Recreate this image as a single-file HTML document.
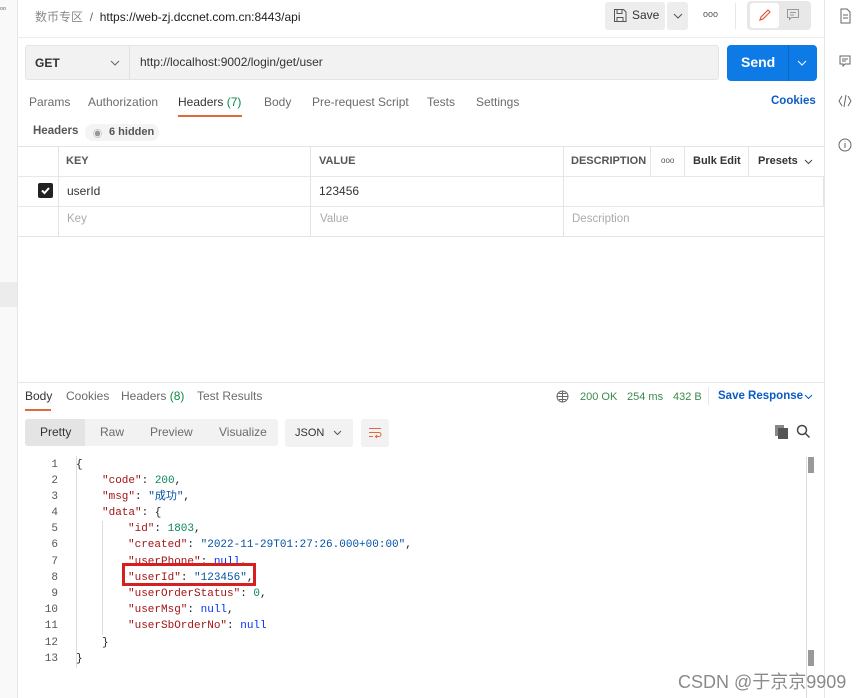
<!DOCTYPE html>
<html><head><meta charset="utf-8"><style>
*{margin:0;padding:0;box-sizing:border-box}
body{width:864px;height:698px;position:relative;overflow:hidden;background:#fff;font-family:"Liberation Sans","Noto Sans CJK SC",sans-serif;font-size:12px;color:#212121}
.a{position:absolute;white-space:nowrap}
.g{color:#6b6b6b}
.code{font-family:"Liberation Mono","Noto Sans CJK SC",monospace;font-size:11px;line-height:14px;height:14px}
.k{color:#a31515}.s{color:#0451a5}.n{color:#098658}.nl{color:#0431fa}
.ln{position:absolute;left:30px;width:28px;text-align:right;color:#555;font-family:"Liberation Mono",monospace;font-size:11px;line-height:14px}
</style></head><body>
<div class="a" style="left:0;top:0;width:18px;height:698px;background:#f9f9f9;border-right:1px solid #e6e6e6"></div>
<div class="a" style="left:0;top:282px;width:17px;height:25px;background:#ececec"></div>
<div class="a" style="left:0;top:5px;font-size:8px;color:#666">ᵒᵒ</div>
<div class="a" style="left:824px;top:0;width:1px;height:698px;background:#e6e6e6"></div>
<svg class="a" style="left:836px;top:6px" width="18" height="150" viewBox="0 0 18 150" fill="none" stroke="#666" stroke-width="1">
<path d="M5 3h6l3 3v11H5z M7 9h5M7 12h5"/>
<path d="M4 50h10v8H9l-2 2v-2H4z M6 53h6M6 55h4"/>
<path d="M6 90l-3 5 3 5M12 90l3 5-3 5M10 89l-2 12"/>
<circle cx="9" cy="139" r="6"/><path d="M9 137v5M9 135v.5"/>
</svg>
<div class="a" style="left:35px;top:8px;font-size:12px"><span style="color:#8a8a8a">数币专区</span> <span style="color:#666">&nbsp;/&nbsp;</span> <span style="color:#212121">https://web-zj.dccnet.com.cn:8443/api</span></div>
<div class="a" style="left:18px;top:37px;width:806px;height:1px;background:#ededed"></div>
<div class="a" style="left:605px;top:2px;width:60px;height:28px;background:#ededed;border-radius:3px"></div>
<svg class="a" style="left:613px;top:8px" width="14" height="15" fill="none" stroke="#555"><path d="M1.5 1.5h9l2.5 2.5v9.5h-11.5z M4 1.5v4h5v-4 M4 13.5v-4h6v4"/></svg>
<div class="a" style="left:632px;top:8px;font-size:12px;color:#333">Save</div>
<div class="a" style="left:667px;top:2px;width:21px;height:28px;background:#ededed;border-radius:3px"></div>
<svg class="a" style="left:673px;top:13px" width="10" height="6" fill="none" stroke="#555"><path d="M1 1l4 4 4-4"/></svg>
<div class="a" style="left:703px;top:9px;font-size:9px;color:#555">ooo</div>
<div class="a" style="left:735px;top:3px;width:1px;height:26px;background:#e6e6e6"></div>
<div class="a" style="left:747px;top:1px;width:64px;height:29px;background:#e8e8e8;border-radius:4px"></div>
<div class="a" style="left:750px;top:3px;width:29px;height:25px;background:#fff;border-radius:3px"></div>
<svg class="a" style="left:757px;top:7px" width="16" height="16" fill="none" stroke="#e05a3a" stroke-width="1.2"><path d="M3 13l1-3 7-7 2 2-7 7z"/></svg>
<svg class="a" style="left:786px;top:8px" width="14" height="14" fill="none" stroke="#999"><path d="M1.5 1.5h11v8h-7l-2 2v-2h-2z M4 4.5h6M4 7h4"/></svg>
<div class="a" style="left:25px;top:45px;width:694px;height:35px;background:#f2f2f2;border:1px solid #e4e4e4;border-radius:3px"></div>
<div class="a" style="left:129px;top:46px;width:1px;height:33px;background:#e0e0e0"></div>
<div class="a" style="left:35px;top:56px;font-size:12px;font-weight:bold;color:#333">GET</div>
<svg class="a" style="left:110px;top:60px" width="10" height="6" fill="none" stroke="#666"><path d="M1 1l4 4 4-4"/></svg>
<div class="a" style="left:140px;top:55px;font-size:12px;color:#333">http://localhost:9002/login/get/user</div>
<div class="a" style="left:727px;top:45px;width:90px;height:36px;background:#0d7ae6;border-radius:4px"></div>
<div class="a" style="left:788px;top:45px;width:1px;height:36px;background:#0a67c4"></div>
<div class="a" style="left:741px;top:54px;font-size:14px;font-weight:bold;color:#fff">Send</div>
<svg class="a" style="left:797px;top:60px" width="10" height="6" fill="none" stroke="#fff"><path d="M1 1l4 4 4-4"/></svg>
<div class="a g" style="left:29px;top:95px">Params</div>
<div class="a g" style="left:88px;top:95px">Authorization</div>
<div class="a" style="left:178px;top:95px;color:#333">Headers <span style="color:#0a8a4a">(7)</span></div>
<div class="a" style="left:178px;top:115px;width:64px;height:2px;background:#e0683c"></div>
<div class="a g" style="left:264px;top:95px">Body</div>
<div class="a g" style="left:312px;top:95px">Pre-request Script</div>
<div class="a g" style="left:427px;top:95px">Tests</div>
<div class="a g" style="left:476px;top:95px">Settings</div>
<div class="a" style="left:771px;top:95px;color:#0b5cc4;font-weight:bold;font-size:11.5px">Cookies</div>
<div class="a" style="left:33px;top:125px;color:#555;font-weight:bold;font-size:11.5px">Headers</div>
<div class="a" style="left:85px;top:124px;width:74px;height:17px;background:#f4f4f4;border-radius:8px"></div>
<div class="a" style="left:93px;top:127px;font-size:9px;color:#999">◉</div>
<div class="a" style="left:109px;top:126px;font-size:11px;font-weight:bold;color:#555">6 hidden</div>
<div class="a" style="left:18px;top:146px;width:806px;height:91px;border-top:1px solid #e4e4e4;border-bottom:1px solid #e4e4e4"></div>
<div class="a" style="left:18px;top:176px;width:806px;height:1px;background:#e8e8e8"></div>
<div class="a" style="left:18px;top:206px;width:806px;height:1px;background:#e8e8e8"></div>
<div class="a" style="left:58px;top:146px;width:1px;height:91px;background:#e4e4e4"></div>
<div class="a" style="left:310px;top:146px;width:1px;height:91px;background:#e4e4e4"></div>
<div class="a" style="left:563px;top:146px;width:1px;height:91px;background:#e4e4e4"></div>
<div class="a" style="left:650px;top:146px;width:1px;height:30px;background:#e4e4e4"></div>
<div class="a" style="left:684px;top:146px;width:1px;height:30px;background:#e4e4e4"></div>
<div class="a" style="left:748px;top:146px;width:1px;height:30px;background:#e4e4e4"></div>
<div class="a" style="left:823px;top:176px;width:1px;height:30px;background:#e4e4e4"></div>
<div class="a" style="left:66px;top:155px;font-size:11px;font-weight:bold;color:#555">KEY</div>
<div class="a" style="left:319px;top:155px;font-size:11px;font-weight:bold;color:#555">VALUE</div>
<div class="a" style="left:571px;top:155px;font-size:11px;font-weight:bold;color:#555">DESCRIPTION</div>
<div class="a" style="left:661px;top:156px;font-size:8px;color:#555">ooo</div>
<div class="a" style="left:693px;top:155px;font-size:11px;font-weight:bold;color:#333">Bulk Edit</div>
<div class="a" style="left:758px;top:155px;font-size:11px;font-weight:bold;color:#333">Presets</div>
<svg class="a" style="left:804px;top:159px" width="9" height="6" fill="none" stroke="#444"><path d="M1 1l3.5 3.5L8 1"/></svg>
<div class="a" style="left:38px;top:183px;width:15px;height:15px;background:#222;border-radius:2px"></div>
<svg class="a" style="left:40px;top:185px" width="11" height="11" fill="none" stroke="#fff" stroke-width="2"><path d="M2 5.5l2.5 2.5L9 3"/></svg>
<div class="a" style="left:67px;top:184px;color:#333">userId</div>
<div class="a" style="left:319px;top:184px;color:#333">123456</div>
<div class="a" style="left:67px;top:213px;color:#aaa;font-size:11.5px">Key</div>
<div class="a" style="left:320px;top:213px;color:#aaa;font-size:11.5px">Value</div>
<div class="a" style="left:572px;top:213px;color:#aaa;font-size:11.5px">Description</div>
<div class="a" style="left:18px;top:382px;width:806px;height:1px;background:#e6e6e6"></div>
<div class="a" style="left:25px;top:389px;color:#333">Body</div>
<div class="a" style="left:25px;top:409px;width:26px;height:2px;background:#e0683c"></div>
<div class="a g" style="left:66px;top:389px">Cookies</div>
<div class="a g" style="left:121px;top:389px">Headers <span style="color:#0a8a4a">(8)</span></div>
<div class="a g" style="left:197px;top:389px">Test Results</div>
<svg class="a" style="left:556px;top:390px" width="13" height="13" fill="none" stroke="#666"><circle cx="6.5" cy="6.5" r="5.5"/><path d="M1 6.5h11M6.5 1v11M3 3.5h7M3 9.5h7"/></svg>
<div class="a" style="left:580px;top:391px;font-size:11px;color:#3a8a4a">200 OK</div>
<div class="a" style="left:627px;top:391px;font-size:11px;color:#3a8a4a">254 ms</div>
<div class="a" style="left:673px;top:391px;font-size:11px;color:#3a8a4a">432 B</div>
<div class="a" style="left:708px;top:387px;width:1px;height:18px;background:#e6e6e6"></div>
<div class="a" style="left:718px;top:390px;font-size:11.5px;font-weight:bold;color:#0b5cc4">Save Response</div>
<svg class="a" style="left:804px;top:394px" width="9" height="6" fill="none" stroke="#0b5cc4"><path d="M1 1l3.5 3.5L8 1"/></svg>
<div class="a" style="left:25px;top:419px;width:253px;height:27px;background:#f2f2f2;border-radius:3px"></div>
<div class="a" style="left:25px;top:419px;width:60px;height:27px;background:#e4e4e4;border-radius:3px 0 0 3px"></div>
<div class="a" style="left:40px;top:425px;color:#333">Pretty</div>
<div class="a g" style="left:100px;top:425px">Raw</div>
<div class="a g" style="left:150px;top:425px">Preview</div>
<div class="a g" style="left:219px;top:425px">Visualize</div>
<div class="a" style="left:285px;top:419px;width:68px;height:28px;background:#f2f2f2;border-radius:3px"></div>
<div class="a" style="left:295px;top:427px;font-size:11px;color:#333">JSON</div>
<svg class="a" style="left:333px;top:430px" width="9" height="6" fill="none" stroke="#555"><path d="M1 1l3.5 3.5L8 1"/></svg>
<div class="a" style="left:361px;top:419px;width:28px;height:28px;background:#f2f2f2;border-radius:3px"></div>
<svg class="a" style="left:368px;top:426px" width="14" height="13" fill="none" stroke="#e0683c"><path d="M1 2.5h12M1 6.5h10a2 2 0 0 1 0 4H8M1 10.5h4M9 9l-1.5 1.5L9 12"/></svg>
<svg class="a" style="left:774px;top:424px" width="16" height="16"><rect x="1" y="1" width="9" height="11" fill="#888"/><rect x="4" y="4" width="10" height="11" fill="#555"/></svg>
<svg class="a" style="left:796px;top:424px" width="15" height="15" fill="none" stroke="#444" stroke-width="1.5"><circle cx="6" cy="6" r="4.5"/><path d="M9.5 9.5l4 4"/></svg>
<div class="a" style="left:806px;top:457px;width:1px;height:241px;background:#ddd"></div>
<div class="a" style="left:808px;top:457px;width:6px;height:16px;background:#999"></div>
<div class="a" style="left:808px;top:650px;width:6px;height:16px;background:#999"></div>
<div class="a" style="left:76px;top:456px;width:1px;height:212px;background:#ddd"></div>
<div class="a" style="left:102px;top:521px;width:1px;height:114px;background:#ddd"></div>
<div class="ln" style="top:458px">1</div><div class="ln" style="top:474px">2</div><div class="ln" style="top:490px">3</div><div class="ln" style="top:506px">4</div><div class="ln" style="top:522px">5</div><div class="ln" style="top:538px">6</div><div class="ln" style="top:555px">7</div><div class="ln" style="top:571px">8</div><div class="ln" style="top:587px">9</div><div class="ln" style="top:603px">10</div><div class="ln" style="top:619px">11</div><div class="ln" style="top:636px">12</div><div class="ln" style="top:652px">13</div>
<div class="a code" style="left:76px;top:458px">{</div>
<div class="a code" style="left:102px;top:474px"><span class="k">"code"</span>: <span class="n">200</span>,</div>
<div class="a code" style="left:102px;top:490px"><span class="k">"msg"</span>: <span class="s">"成功"</span>,</div>
<div class="a code" style="left:102px;top:506px"><span class="k">"data"</span>: {</div>
<div class="a code" style="left:128px;top:522px"><span class="k">"id"</span>: <span class="n">1803</span>,</div>
<div class="a code" style="left:128px;top:538px"><span class="k">"created"</span>: <span class="s">"2022-11-29T01:27:26.000+00:00"</span>,</div>
<div class="a code" style="left:128px;top:555px"><span class="k">"userPhone"</span>: <span class="nl">null</span>,</div>
<div class="a code" style="left:128px;top:587px"><span class="k">"userOrderStatus"</span>: <span class="n">0</span>,</div>
<div class="a code" style="left:128px;top:603px"><span class="k">"userMsg"</span>: <span class="nl">null</span>,</div>
<div class="a code" style="left:128px;top:619px"><span class="k">"userSbOrderNo"</span>: <span class="nl">null</span></div>
<div class="a code" style="left:102px;top:636px">}</div>
<div class="a code" style="left:76px;top:652px">}</div>
<div class="a" style="left:122px;top:563px;width:134px;height:23px;border:3px solid #d42020;background:rgba(255,255,255,0.6)"></div>
<div class="a code" style="left:128px;top:571px"><span class="k">"userId"</span>: <span class="s">"123456"</span>,</div>
<div class="a" style="left:678px;top:668px;font-size:18px;color:#8a8a8a">CSDN @于京京9909</div>
</body></html>
